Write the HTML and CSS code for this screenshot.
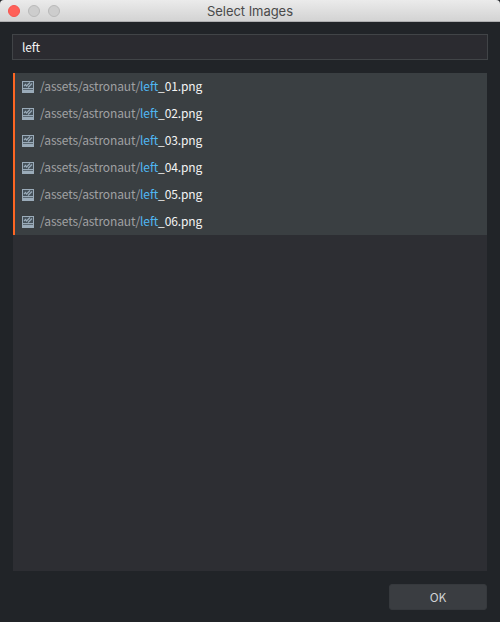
FILE: index.html
```html
<!DOCTYPE html>
<html lang="en">
  <head>
    <meta charset="UTF-8" />
    <title>Select Images</title>
    <link rel="stylesheet" href="styles.css">
  </head>
  <body>
    <svg class="sprite">
      <symbol id="image-icon" viewBox="0 0 12 12">
        <path d="M0 0h12v12H0z" fill="#9aabb9" />
        <path d="M1 1h10v6H1z" fill="#46525b" />
        <path d="M1 8h10v1H1z" fill="#5c6973" />
        <path d="M2 5l1.500-1.500 1 1.500L8 1.500M6 6.500L10 2.500" fill="none" stroke="#9aabb9" stroke-width="1.200" />
        <path d="M1 9h10v2H1z" fill="#9aabb9" />
      </symbol>
    </svg>
    <div class="window">
      <header class="titlebar">
        <div class="controls">
          <span class="dot close"></span>
          <span class="dot"></span>
          <span class="dot"></span>
        </div>
        <h1>Select Images</h1>
      </header>
      <main>
        <input class="filter" type="text" value="left" />
        <ul class="list">
          <li><svg class="icon"><use href="#image-icon" /></svg><span>/assets/astronaut/<em>left</em><b>_01.png</b></span></li>
          <li><svg class="icon"><use href="#image-icon" /></svg><span>/assets/astronaut/<em>left</em><b>_02.png</b></span></li>
          <li><svg class="icon"><use href="#image-icon" /></svg><span>/assets/astronaut/<em>left</em><b>_03.png</b></span></li>
          <li><svg class="icon"><use href="#image-icon" /></svg><span>/assets/astronaut/<em>left</em><b>_04.png</b></span></li>
          <li><svg class="icon"><use href="#image-icon" /></svg><span>/assets/astronaut/<em>left</em><b>_05.png</b></span></li>
          <li><svg class="icon"><use href="#image-icon" /></svg><span>/assets/astronaut/<em>left</em><b>_06.png</b></span></li>
        </ul>
        <button class="ok" type="button">OK</button>
      </main>
    </div>
  </body>
</html>
```
FILE: styles.css
```css
* {
  box-sizing: border-box;
}
body {
  margin: 0;
  background: #212428;
  font-family: "Noto Sans CJK SC", "Noto Sans", sans-serif;
  font-size: 12px;
  letter-spacing: -0.13px;
}
.sprite {
  display: none;
}
.window {
  display: flex;
  flex-direction: column;
  height: 622px;
}
.titlebar {
  display: grid;
  grid-template-columns: 1fr auto 1fr;
  align-items: center;
  height: 22px;
  padding: 0 8px;
  background: linear-gradient(#ebebeb, #d3d3d3);
  border-bottom: 1px solid #aeaeb0;
  border-radius: 4px 4px 0 0;
}
.titlebar h1 {
  margin: 0;
  color: #4a4a4a;
  font: 13px/22px Inter, sans-serif;
  letter-spacing: -0.05px;
}
.controls {
  display: flex;
  gap: 8px;
}
.dot {
  width: 12px;
  height: 12px;
  border: 1px solid #b9b9b9;
  border-radius: 50%;
  background: #cdcdcd;
}
.close {
  border-color: #f5554f;
  background: #ff6159;
}
main {
  display: flex;
  flex: 1;
  flex-direction: column;
  padding: 12px;
}
.filter {
  height: 26px;
  padding: 0 9px 1px;
  border: 1px solid #414447;
  outline: none;
  background: #2b2b30;
  color: #f4f4f4;
  font: inherit;
  letter-spacing: inherit;
}
.list {
  flex: 1;
  margin: 13px 1px;
  padding: 0;
  background: #2d2e33;
  list-style: none;
}
.list li {
  display: flex;
  align-items: center;
  height: 27px;
  padding-left: 7px;
  border-left: 2px solid #fd6623;
  background: #3a3f42;
  color: #a0a1a2;
  line-height: 25px;
}
.list span {
  padding-bottom: 2px;
}
.list em {
  color: #50b8f5;
  font-style: normal;
}
.list b {
  color: #f4f4f4;
  font-weight: normal;
}
.icon {
  width: 12px;
  height: 12px;
  margin-right: 6px;
}
.ok {
  align-self: flex-end;
  width: 98px;
  height: 26px;
  margin-right: 1px;
  padding: 0 0 1px;
  border: 1px solid #36393d;
  border-radius: 3px;
  background: #3a3d41;
  color: #d0d2d4;
  font: inherit;
  letter-spacing: inherit;
}
```
